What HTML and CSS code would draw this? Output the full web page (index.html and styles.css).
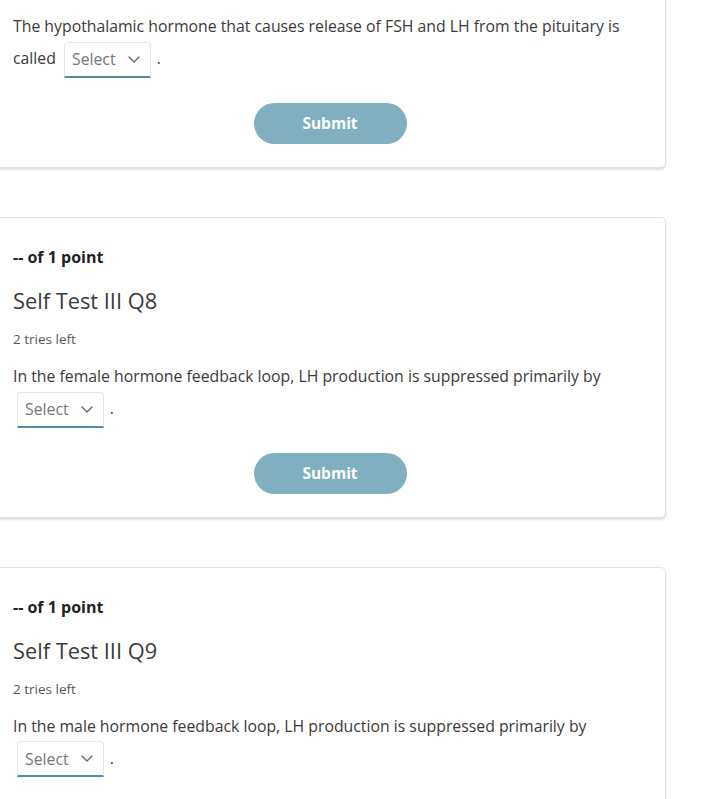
FILE: index.html
```html
<!DOCTYPE html>
<html lang="en">
<head>
<meta charset="utf-8">
<title>Self Test</title>
<link rel="stylesheet" href="styles.css">
</head>
<body>
<main class="list">
  <section class="card card-first">
    <p class="question">The hypothalamic hormone that causes release of FSH and LH from the pituitary is called <span class="select"><span class="select-label">Select</span><svg class="chev" viewBox="0 0 12 7" width="12" height="7"><path d="M1 1 L6 6 L11 1" fill="none" stroke="#666" stroke-width="1.4" stroke-linecap="round" stroke-linejoin="round"/></svg></span> .</p>
    <div class="actions"><button class="submit" type="button">Submit</button></div>
  </section>

  <section class="card">
    <div class="points">-- of 1 point</div>
    <h2 class="title">Self Test III Q8</h2>
    <div class="tries">2 tries left</div>
    <p class="question">In the female hormone feedback loop, LH production is suppressed primarily by <span class="select"><span class="select-label">Select</span><svg class="chev" viewBox="0 0 12 7" width="12" height="7"><path d="M1 1 L6 6 L11 1" fill="none" stroke="#666" stroke-width="1.4" stroke-linecap="round" stroke-linejoin="round"/></svg></span> .</p>
    <div class="actions"><button class="submit" type="button">Submit</button></div>
  </section>

  <section class="card">
    <div class="points">-- of 1 point</div>
    <h2 class="title">Self Test III Q9</h2>
    <div class="tries">2 tries left</div>
    <p class="question">In the male hormone feedback loop, LH production is suppressed primarily by <span class="select"><span class="select-label">Select</span><svg class="chev" viewBox="0 0 12 7" width="12" height="7"><path d="M1 1 L6 6 L11 1" fill="none" stroke="#666" stroke-width="1.4" stroke-linecap="round" stroke-linejoin="round"/></svg></span> .</p>
    <div class="actions"><button class="submit" type="button">Submit</button></div>
  </section>
</main>
</body>
</html>
```
FILE: styles.css
```css
html, body {
  margin: 0;
  padding: 0;
  background: #ffffff;
}
body {
  font-family: "Open Sans", "Noto Sans", sans-serif;
  color: #3a3a3a;
  overflow: hidden;
}
.list {
  display: flex;
  flex-direction: column;
  gap: 49px;
  width: 672px;
  margin-left: -6px;
  margin-top: -40px;
}
.card {
  background: #fff;
  border: 1px solid #e2e2e2;
  border-radius: 5px;
  box-shadow: 0 2px 2px rgba(0, 0, 0, 0.12);
  padding: 29px 18px 23px 18px;
}
.card-first {
  padding-top: 49px;
}
.points {
  font-size: 16px;
  font-weight: 700;
  line-height: 20px;
  color: #222;
}
.title {
  margin: 21px 0 0 0;
  font-size: 21.8px;
  font-weight: 400;
  line-height: 26px;
  color: #3a3a3a;
}
.tries {
  margin-top: 17px;
  font-size: 13.5px;
  line-height: 16px;
  color: #555;
}
.question {
  margin: 13px 0 0 0;
  font-size: 15.8px;
  line-height: 32px;
  color: #3a3a3a;
}
.card-first .question {
  margin-top: 0;
}
.select {
  display: inline-flex;
  align-items: center;
  gap: 12px;
  box-sizing: border-box;
  height: 36px;
  padding: 0 10px 0 7px;
  margin: -2px 2px -2px 4px;
  vertical-align: middle;
  border: 1px solid #e6e6e6;
  border-bottom: 2px solid #4f8da3;
  border-radius: 4px 4px 0 0;
  font-size: 15.8px;
  line-height: 20px;
  color: #777;
}
.chev {
  display: block;
}
.actions {
  display: flex;
  justify-content: center;
  margin-top: 27px;
}
.submit {
  width: 153px;
  height: 41px;
  border: none;
  border-radius: 21px;
  background: #80afc1;
  color: #fff;
  font-family: "Open Sans", "Noto Sans", sans-serif;
  font-size: 15.5px;
  font-weight: 700;
  cursor: pointer;
}
```
